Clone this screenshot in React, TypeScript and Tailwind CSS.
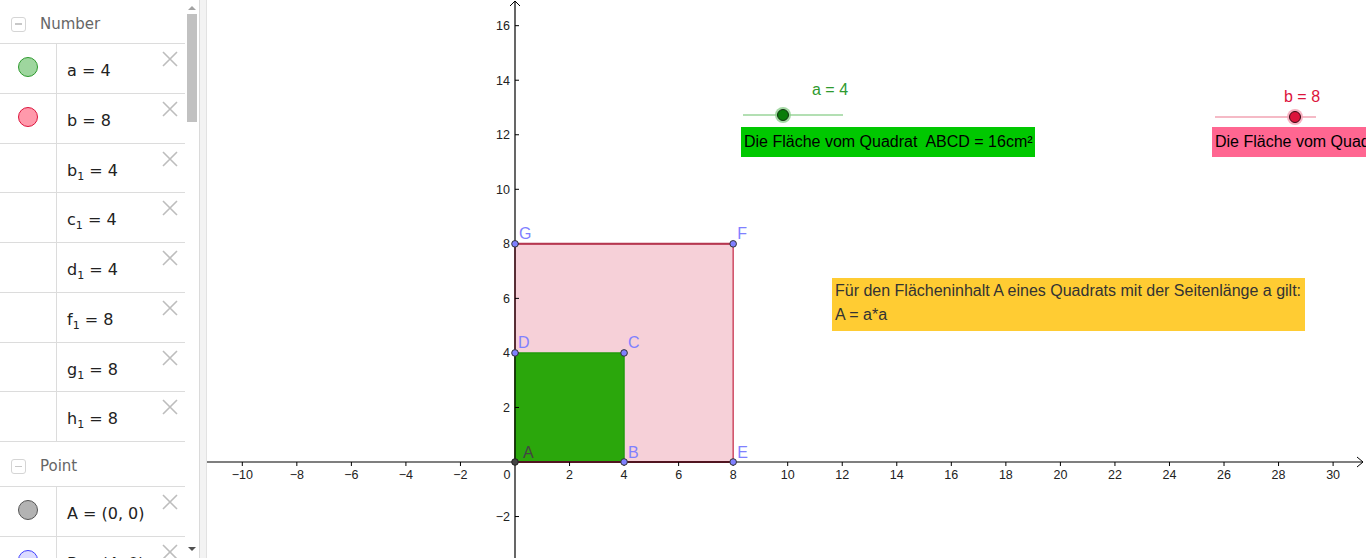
import React from "react";

const S = 27.27;
const OX = 308;
const OY = 462;
const px = (x: number) => OX + x * S;
const py = (y: number) => OY - y * S;

function XIcon() {
  return (
    <svg width="16" height="16" viewBox="0 0 16 16" className="absolute right-[7px] top-[7px]">
      <path d="M1 1 L15 15 M15 1 L1 15" stroke="#bdbdbd" strokeWidth="1.6" />
    </svg>
  );
}

function Dot({ fill, stroke }: { fill: string; stroke: string }) {
  return (
    <div
      className="w-[20px] h-[20px] rounded-full border"
      style={{ background: fill, borderColor: stroke }}
    />
  );
}

function Row({
  dot,
  children,
}: {
  dot?: React.ReactNode;
  children: React.ReactNode;
}) {
  return (
    <div className="relative flex h-[49.75px] border-b border-[#dcdcdc] shrink-0">
      <div className="w-[57px] border-r border-[#dcdcdc] flex justify-center pt-[13px]">{dot}</div>
      <div className="flex-1 pl-[10px] pt-[17px] text-[16px] text-[#222] leading-[20px]">{children}</div>
      <XIcon />
    </div>
  );
}

function Header({ label, h }: { label: string; h: string }) {
  return (
    <div className={"flex items-center border-b border-[#dcdcdc] shrink-0 pt-[5px] " + h}>
      <div className="ml-[11px] w-[15px] h-[15px] border border-[#d5d5d5] rounded-[3px] flex items-center justify-center">
        <div className="w-[7px] h-[1.5px] bg-[#c8c8c8]" />
      </div>
      <span className="ml-[14px] text-[15px] text-[#666]">{label}</span>
    </div>
  );
}

function Sub({ v, n }: { v: string; n: string }) {
  return (
    <span>
      {v}
      <span className="text-[11px] relative top-[4px]">1</span>
      {" = " + n}
    </span>
  );
}

export default function App() {
  const xs: number[] = [];
  for (let k = -10; k <= 30; k += 2) if (k !== 0) xs.push(k);
  const ys = [16, 14, 12, 10, 8, 6, 4, 2, -2];
  const label = (k: number) => (k < 0 ? "\u2212" + Math.abs(k) : String(k));
  const blue = "#8080ff";
  const pts: [number, number][] = [
    [4, 0],
    [8, 0],
    [4, 4],
    [0, 4],
    [0, 8],
    [8, 8],
  ];
  return (
    <div
      className="flex w-[1366px] h-[558px] overflow-hidden bg-white"
      style={{ fontFamily: '"DejaVu Sans", sans-serif' }}
    >
      {/* Algebra panel */}
      <div className="relative w-[200px] h-full flex border-r border-[#dadada] shrink-0">
        <div className="w-[186px] h-full flex flex-col overflow-hidden">
          <Header label="Number" h="h-[44px]" />
          <Row dot={<Dot fill="#9ed69e" stroke="#2e9a2e" />}>a = 4</Row>
          <Row dot={<Dot fill="#ff99ab" stroke="#dc143c" />}>b = 8</Row>
          <Row><Sub v="b" n="4" /></Row>
          <Row><Sub v="c" n="4" /></Row>
          <Row><Sub v="d" n="4" /></Row>
          <Row><Sub v="f" n="8" /></Row>
          <Row><Sub v="g" n="8" /></Row>
          <Row><Sub v="h" n="8" /></Row>
          <Header label="Point" h="h-[45px]" />
          <Row dot={<Dot fill="#b3b3b3" stroke="#555" />}>A = (0, 0)</Row>
          <Row dot={<Dot fill="#dcdcff" stroke="#4040ff" />}>B = (4, 0)</Row>
        </div>
        <div className="w-[14px] h-full relative bg-white">
          <svg width="14" height="10" className="absolute left-0 top-[3px]">
            <path d="M3 7 L7 3 L11 7 Z" fill="#a3a3a3" />
          </svg>
          <div className="absolute left-[2px] top-[14px] w-[10px] h-[108px] bg-[#c1c1c1]" />
          <svg width="14" height="10" className="absolute left-0 bottom-[4px]">
            <path d="M3 3 L7 7 L11 3 Z" fill="#505050" />
          </svg>
        </div>
      </div>
      <div className="w-[7px] h-full bg-[#f3f3f3] border-r border-[#e2e2e2] shrink-0" />

      {/* Graphics view */}
      <div className="relative flex-1 h-full overflow-hidden">
        <svg width="1159" height="558" className="absolute left-0 top-0" style={{ fontFamily: '"Liberation Sans", Arial, sans-serif' }}>
          {/* pink square */}
          <rect x={px(0)} y={py(8)} width={8 * S} height={8 * S} fill="#f6d0d8" stroke="#c8334f" strokeWidth="1.3" />
          <line x1={px(0)} y1={py(8)} x2={px(8)} y2={py(8)} stroke="#b53750" strokeWidth="2" />
          {/* green square */}
          <rect x={px(0)} y={py(4)} width={4 * S} height={4 * S} fill="#2ba70c" stroke="#1f9a0a" strokeWidth="1.3" />
          <line x1={px(0)} y1={py(0)} x2={px(8)} y2={py(0)} stroke="#a02b40" strokeWidth="2" />

          {/* axes */}
          <line x1="0" y1={OY} x2="1156" y2={OY} stroke="#000" strokeWidth="1.2" />
          <path d={`M1150 ${OY - 5} L1156 ${OY} L1150 ${OY + 5}`} fill="none" stroke="#000" strokeWidth="1" />
          <line x1={OX} y1="1" x2={OX} y2="558" stroke="#000" strokeWidth="1.2" />
          <path d={`M${OX - 5} 6 L${OX} 1 L${OX + 5} 6`} fill="none" stroke="#000" strokeWidth="1" />

          {xs.map((k) => (
            <g key={"x" + k}>
              <line x1={px(k)} y1={OY} x2={px(k)} y2={OY + 4} stroke="#000" strokeWidth="1" />
              <text x={px(k)} y={479} fontSize="12.5" fill="#222" textAnchor="middle">
                {label(k)}
              </text>
            </g>
          ))}
          <text x={OX - 8} y={479} fontSize="12.5" fill="#222" textAnchor="middle">0</text>
          {ys.map((k) => (
            <g key={"y" + k}>
              <line x1={OX} y1={py(k)} x2={OX + 4} y2={py(k)} stroke="#000" strokeWidth="1" />
              <text x={OX - 5} y={py(k) + 4.5} fontSize="12.5" fill="#222" textAnchor="end">
                {label(k)}
              </text>
            </g>
          ))}

          {/* points */}
          {pts.map(([x, y]) => (
            <circle key={x + "-" + y} cx={px(x)} cy={py(y)} r="3.3" fill={blue} stroke="#333" strokeWidth="1" />
          ))}
          <circle cx={px(0)} cy={py(0)} r="3.3" fill="#444" stroke="#222" strokeWidth="1" />

          {/* point labels */}
          <g fontSize="16" fill={blue}>
            <text x={px(0) + 4} y={239}>G</text>
            <text x={px(8) + 4} y={239}>F</text>
            <text x={px(0) + 3} y={348}>D</text>
            <text x={px(4) + 4} y={348}>C</text>
            <text x={px(4) + 4} y={458}>B</text>
            <text x={px(8) + 4} y={458}>E</text>
          </g>
          <text x={px(0) + 8} y={458} fontSize="16" fill="#444">A</text>

          {/* slider a */}
          <line x1={536} y1={115} x2={636} y2={115} stroke="#9ad49a" strokeWidth="1.3" />
          <circle cx={576} cy={115} r="8" fill="#8fcf8f" opacity="0.8" />
          <circle cx={576} cy={115} r="5.5" fill="#0a7d0a" stroke="#113311" strokeWidth="1" />
          <text x={605} y={95} fontSize="16" fill="#2e9a2e">a = 4</text>

          {/* slider b */}
          <line x1={1008} y1={117} x2={1109} y2={117} stroke="#f2a3b3" strokeWidth="1.3" />
          <circle cx={1088} cy={117} r="8" fill="#f7a5b7" opacity="0.85" />
          <circle cx={1088} cy={117} r="5.5" fill="#dc143c" stroke="#3a0a14" strokeWidth="1" />
          <text x={1077} y={102} fontSize="16" fill="#dc143c">b = 8</text>
        </svg>

        <div
          className="absolute left-[534px] top-[127px] w-[294px] h-[30px] bg-[#00c800] text-black text-[16px] pl-[3px] leading-[30px] whitespace-nowrap overflow-hidden"
          style={{ fontFamily: '"Liberation Sans", Arial, sans-serif' }}
        >
          Die Fläche vom Quadrat&nbsp; ABCD = 16cm²
        </div>
        <div
          className="absolute left-[1005px] top-[127px] w-[300px] h-[30px] bg-[#ff6691] text-black text-[16px] pl-[3px] leading-[30px] whitespace-nowrap"
          style={{ fontFamily: '"Liberation Sans", Arial, sans-serif' }}
        >
          Die Fläche vom Quadrat&nbsp; EFGH = 64cm²
        </div>
        <div
          className="absolute left-[625px] top-[278px] w-[473px] h-[53px] bg-[#ffcc33] text-[#333] text-[16px] pl-[3px] pt-[1px] leading-[24px] whitespace-nowrap"
          style={{ fontFamily: '"Liberation Sans", Arial, sans-serif' }}
        >
          <div>Für den Flächeninhalt A eines Quadrats mit der Seitenlänge a gilt:</div>
          <div>A = a*a</div>
        </div>
      </div>
    </div>
  );
}
